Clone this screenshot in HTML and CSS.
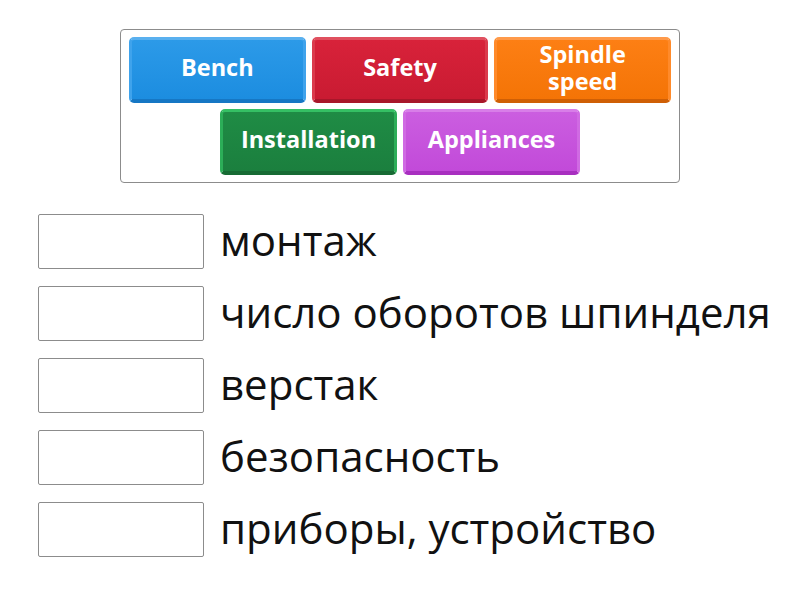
FILE: index.html
```html
<!DOCTYPE html>
<html>
<head>
<meta charset="utf-8">
<link rel="stylesheet" href="styles.css">
</head>
<body>
<div class="page">
  <div class="bank">
    <div class="bank-row">
      <div class="tile blue"><span>Bench</span></div>
      <div class="tile red"><span>Safety</span></div>
      <div class="tile orange"><span>Spindle speed</span></div>
    </div>
    <div class="bank-row">
      <div class="tile green"><span>Installation</span></div>
      <div class="tile purple"><span>Appliances</span></div>
    </div>
  </div>
  <div class="rows">
    <div class="row"><div class="slot"></div><div class="label">монтаж</div></div>
    <div class="row"><div class="slot"></div><div class="label">число оборотов шпинделя</div></div>
    <div class="row"><div class="slot"></div><div class="label">верстак</div></div>
    <div class="row"><div class="slot"></div><div class="label">безопасность</div></div>
    <div class="row"><div class="slot"></div><div class="label">приборы, устройство</div></div>
  </div>
</div>
</body>
</html>
```
FILE: styles.css
```css
html, body {
  margin: 0;
  padding: 0;
  background: #fff;
}
body {
  font-family: "Open Sans", "DejaVu Sans", sans-serif;
}
.page {
  width: 800px;
  height: 600px;
  padding-top: 29px;
  box-sizing: border-box;
}
.bank {
  width: 560px;
  margin: 0 auto;
  border: 1px solid #8c8c8c;
  border-radius: 4px;
  padding: 4px 5px;
  box-sizing: border-box;
  display: flex;
  flex-direction: column;
}
.bank-row {
  display: flex;
  justify-content: center;
}
.tile {
  width: 177px;
  height: 66px;
  margin: 3px;
  box-sizing: border-box;
  border-radius: 5px;
  border: 3px solid;
  border-bottom-width: 4px;
  display: flex;
  align-items: center;
  justify-content: center;
  text-align: center;
  color: #fff;
  font-weight: 700;
  font-size: 23.5px;
  line-height: 27px;
  padding: 0 10px 4px;
}
.tile span { display: block; }
.blue {
  background: linear-gradient(#2c9ae8, #1c8de0);
  border-color: #59b0ef #3fa3ec #1677c4 #3fa3ec;
}
.red {
  background: linear-gradient(#d8223a, #c91b32);
  border-color: #e0505f #db3a4c #a8172a #db3a4c;
}
.orange {
  background: linear-gradient(#fd7f14, #f47406);
  border-color: #ff9a4a #ff8a2a #cf5f05 #ff8a2a;
}
.green {
  background: linear-gradient(#1f8c45, #1b7f3e);
  border-color: #35c064 #2cae58 #176b34 #2cae58;
}
.purple {
  background: linear-gradient(#cb5ee0, #c24ad9);
  border-color: #d87ee8 #d06ae3 #a82fc0 #d06ae3;
}
.rows {
  padding-top: 31px;
  padding-left: 38px;
  display: flex;
  flex-direction: column;
  gap: 17px;
}
.row {
  display: flex;
  align-items: center;
  height: 55px;
}
.slot {
  width: 166px;
  height: 55px;
  box-sizing: border-box;
  border: 1px solid #8c8c8c;
  border-radius: 2px;
  background: #fff;
  flex: none;
}
.label {
  margin-left: 16px;
  font-size: 42px;
  color: #111;
  white-space: nowrap;
  line-height: 1;
  padding-bottom: 4px;
}
```
